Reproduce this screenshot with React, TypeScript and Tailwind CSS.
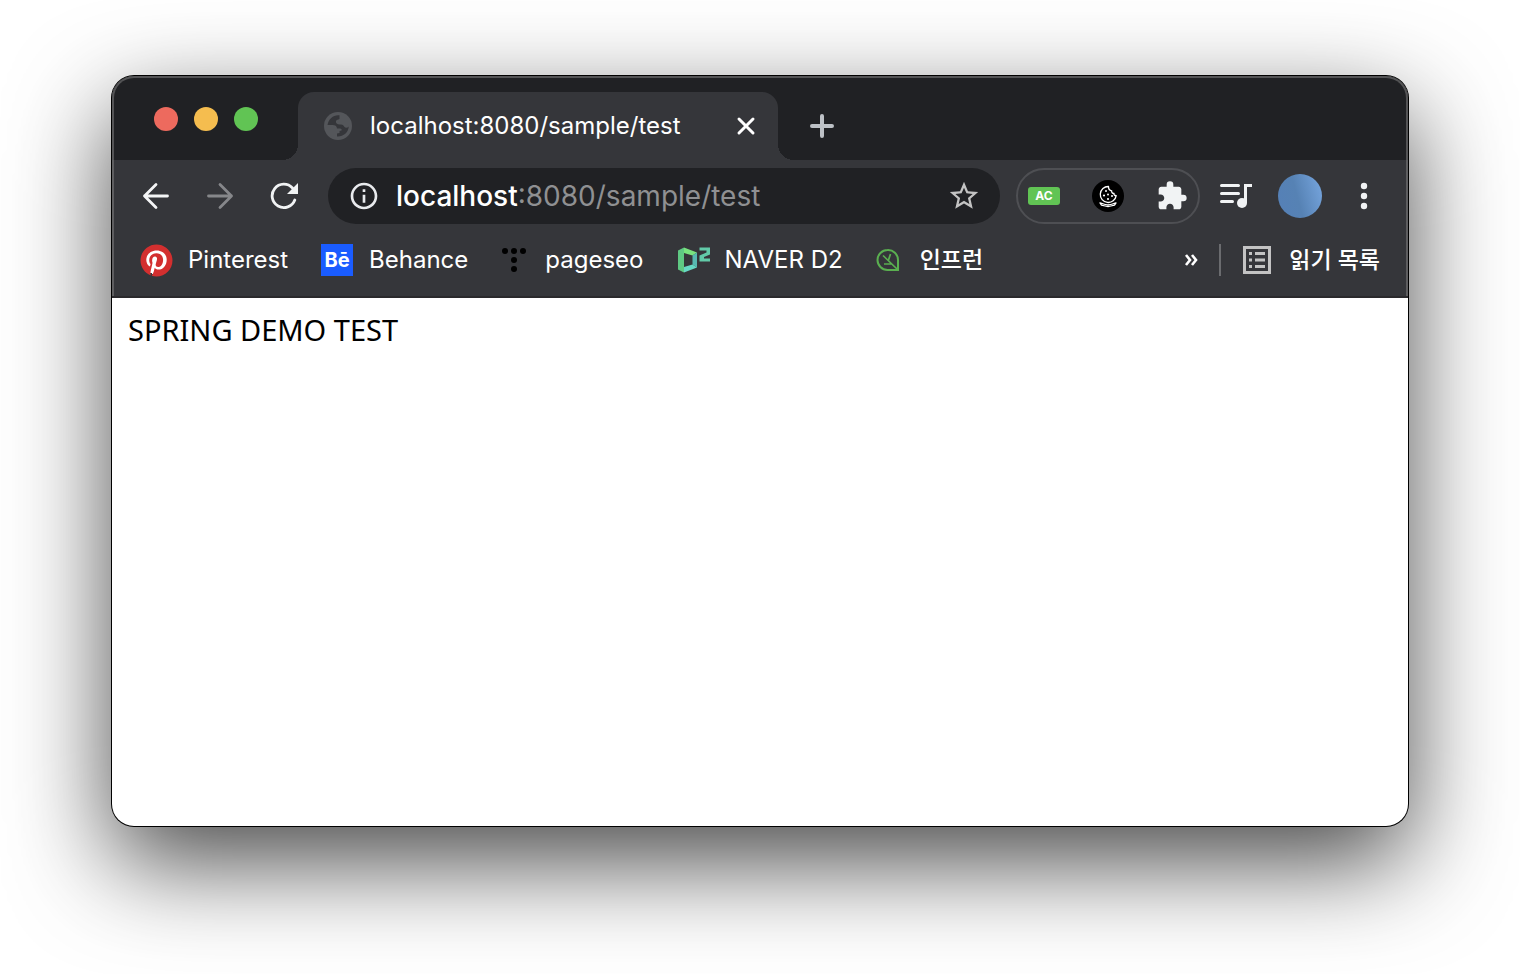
import React from "react";
import { MdExtension, MdStarBorder, MdInfoOutline } from "react-icons/md";
import { FaPinterest } from "react-icons/fa";

const sans = "font-['Inter','Noto_Sans_CJK_KR',sans-serif]";

function Globe() {
  return (
    <svg viewBox="0 0 28 28" className="size-7 shrink-0" aria-hidden="true">
      <circle cx="14" cy="14" r="14" fill="#54565a" />
      <path
        d="M14 3.200C9 3.200 4.500 7 3.500 13H8.500C11 13 13 14 13 16.500H16C17.500 16.500 18 17.500 17.500 18.500L15.500 19V21L13 21.500V24.500C19 25 24.500 20.500 24.700 14.500C23.500 16 21.500 16 20.500 15C19.500 13.500 19 12.500 17 12.500C13.500 13 11.500 11.500 12 9C12.500 7.500 14 8 15.500 7V3.300Z"
        fill="#35363a"
      />
    </svg>
  );
}

function Arrow({ forward = false }: { forward?: boolean }) {
  return (
    <svg
      viewBox="0 0 28 28"
      className={forward ? "size-7 rotate-180" : "size-7"}
      fill="none"
      stroke={forward ? "#86878a" : "#f4f5f6"}
      strokeWidth="2.8"
      strokeLinecap="round"
      strokeLinejoin="round"
      aria-hidden="true"
    >
      <path d="M25.500 14H2.500M14 2.500L2.500 14l11.500 11.500" />
    </svg>
  );
}

function Reload() {
  return (
    <svg viewBox="0 0 28 28" className="size-7" aria-hidden="true">
      <path
        d="M24.800 18A11.700 11.700 0 1 1 22.500 6"
        fill="none"
        stroke="#f1f3f4"
        strokeWidth="2.8"
        strokeLinecap="round"
      />
      <path d="M28 1v11H17Z" fill="#f1f3f4" />
    </svg>
  );
}

function Cookie() {
  return (
    <svg viewBox="0 0 32 32" className="size-8" aria-hidden="true">
      <circle cx="16" cy="16" r="16" fill="#000" />
      <g fill="none" stroke="#fff" strokeWidth="1.300" strokeLinejoin="round" strokeLinecap="round">
        <path d="M16.500 6.500a8 8 0 1 0 7.700 9.200c-1.800 0-2.500-1-2.200-2.400-1.600.2-2.700-1-2.300-2.500-2-.2-3.200-1.800-3.200-4.300Z" />
        <path d="M8 22.800c2 .2 3.500 2 8 2s6-1.800 8-2l-1.500 2.400c-2 0-3.500 1.300-6.500 1.300s-4.500-1.300-6.500-1.300Z" />
      </g>
      <g fill="#fff">
        <circle cx="14" cy="11" r="1" />
        <circle cx="12" cy="15.500" r="1.100" />
        <circle cx="16" cy="14.500" r="1" />
        <circle cx="20" cy="16" r="1" />
        <circle cx="16" cy="19" r="1.100" />
      </g>
    </svg>
  );
}

function Queue() {
  return (
    <svg viewBox="0 0 32 26" className="h-[26px] w-8" aria-hidden="true">
      <path d="M1.500 2.500h17M1.500 10.500h17M1.500 18.500h11" stroke="#f1f3f4" strokeWidth="3" strokeLinecap="round" />
      <path d="M24 20V1h8v3h-5v16Z" fill="#f1f3f4" />
      <circle cx="22" cy="20" r="5" fill="#f1f3f4" />
    </svg>
  );
}

function Dots() {
  const dots = [[4, 4], [13, 4], [22, 4], [13, 13], [13, 22]];
  return (
    <svg viewBox="0 0 26 26" className="size-[26px]" aria-hidden="true">
      {dots.map(([x, y]) => (
        <circle key={`${x}-${y}`} cx={x} cy={y} r="3" fill="#000" />
      ))}
    </svg>
  );
}

function D2() {
  return (
    <svg viewBox="0 0 34 28" className="h-7 w-[34px]" aria-hidden="true">
      <path d="M1 4.500 7 1.500V26.500L1 23.500Z" fill="#5fc983" />
      <path d="M7 1.500 20 6.500 15.500 9.500 7 7Z" fill="#79e27f" />
      <path d="M20 6.500v15l-4.500-3V9.500Z" fill="#57b9b2" />
      <path d="M7 21 15.500 18.500l4.500 3L7 26.500Z" fill="#67d8c5" />
      <path d="M22.500 1.500H33V8.500L27 11v1.500h6v3H22.500V9.500L29.500 6.500V4.500h-7Z" fill="#62caa8" />
    </svg>
  );
}

function Leaf() {
  return (
    <svg viewBox="0 0 24 24" className="size-6" fill="none" stroke="#5aaf50" strokeWidth="2" aria-hidden="true">
      <path d="M11.500 2A10 10 0 0 1 22 12v10H11.500a10 10 0 0 1 0-20Z" />
      <path d="M7 7.500l14 13.500M14.500 6l-2 6M8 16h7.500" strokeWidth="1.700" />
    </svg>
  );
}

function ReadingList() {
  return (
    <svg viewBox="0 0 28 28" className="size-7" fill="#c3c3c3" aria-hidden="true">
      <path d="M0 0h28v28H0ZM3 3v22h22V3Z" fillRule="evenodd" />
      <path d="M6 6h3v3H6ZM12 6h10v3H12ZM6 12.500h3v3H6ZM12 12.500h10v3H12ZM6 19h3v3H6ZM12 19h10v3H12Z" />
    </svg>
  );
}

function Bookmark({ label, gap, children }: { label: string; gap: string; children: React.ReactNode }) {
  return (
    <a href="#" className={`flex items-center whitespace-nowrap ${gap}`}>
      {children}
      <span>{label}</span>
    </a>
  );
}

export default function App() {
  return (
    <div className="flex min-h-screen flex-col bg-white px-28 pt-[76px] pb-[148px]">
      <div
        className={`relative flex flex-1 flex-col overflow-hidden rounded-[22px] bg-white text-2xl text-white shadow-[0_0_0_1px_#000,0_36px_100px_rgba(0,0,0,0.72)] ${sans}`}
      >
        <header className="border-b-2 border-[#2a292c] bg-[#35363a]">
          <div className="flex h-[84px] bg-[#202124] pt-4">
            <div className="flex w-[186px] gap-4 pt-[15px] pl-[42px]">
              <button aria-label="Close window" className="size-6 rounded-full bg-[#ed6a5e]" />
              <button aria-label="Minimize window" className="size-6 rounded-full bg-[#f5bd4f]" />
              <button aria-label="Zoom window" className="size-6 rounded-full bg-[#61c454]" />
            </div>
            <div className="relative flex w-[480px] items-center rounded-t-2xl bg-[#35363a] px-[26px]">
              <span className="absolute bottom-0 -left-4 size-4 bg-[radial-gradient(circle_at_0_0,#202124_16px,#35363a_16px)]" />
              <span className="absolute -right-4 bottom-0 size-4 bg-[radial-gradient(circle_at_100%_0,#202124_16px,#35363a_16px)]" />
              <Globe />
              <span className="ml-[18px] flex-1 whitespace-nowrap">localhost:8080/sample/test</span>
              <button aria-label="Close tab" className="-mr-1">
                <svg viewBox="0 0 20 20" className="size-5" stroke="#fff" strokeWidth="3" strokeLinecap="round">
                  <path d="M3 3l14 14M17 3L3 17" />
                </svg>
              </button>
            </div>
            <button aria-label="New tab" className="ml-8 self-center">
              <svg viewBox="0 0 24 24" className="size-6" stroke="#bdc1c6" strokeWidth="4" strokeLinecap="round">
                <path d="M2 12h20M12 2v20" />
              </svg>
            </button>
          </div>

          <div className="flex h-[72px] items-center pr-[39px] pl-[30px]">
            <nav className="flex items-center gap-9">
              <button aria-label="Back"><Arrow /></button>
              <button aria-label="Forward"><Arrow forward /></button>
              <button aria-label="Reload"><Reload /></button>
            </nav>
            <div className="ml-[30px] flex h-14 flex-1 items-center rounded-full bg-[#202124] pr-[19px] pl-5">
              <MdInfoOutline className="size-8 text-[#e8eaed]" />
              <span className="ml-4 flex-1 pt-0.5 text-[28px] whitespace-nowrap">
                <span className="font-medium">localhost</span>
                <span className="text-[#8f9092]">:8080/sample/test</span>
              </span>
              <button aria-label="Bookmark this page">
                <MdStarBorder className="size-[34px] text-[#c3c3c3]" />
              </button>
            </div>
            <div className="ml-4 flex h-14 w-[184px] items-center justify-between rounded-full border-2 border-[#4e4f53] px-2.5">
              <button className="flex h-[18px] w-8 items-center justify-center rounded-[3px] bg-[#61c454] text-xs font-bold">AC</button>
              <button aria-label="Cookies"><Cookie /></button>
              <button aria-label="Extensions"><MdExtension className="size-8 text-[#f1f3f4]" /></button>
            </div>
            <button aria-label="Media" className="ml-5"><Queue /></button>
            <button
              aria-label="Profile"
              className="ml-[26px] size-11 rounded-full bg-[linear-gradient(75deg,#5580b7_0%,#5682b4_45%,#78a7e0_100%)]"
            />
            <button aria-label="Menu" className="ml-[37px]">
              <svg viewBox="0 0 10 28" className="h-7 w-2.5" fill="#f1f3f4">
                <circle cx="5" cy="4" r="3.200" />
                <circle cx="5" cy="14" r="3.200" />
                <circle cx="5" cy="24" r="3.200" />
              </svg>
            </button>
          </div>

          <div className="flex h-16 items-start justify-between px-7 pt-2">
            <div className="flex h-10 items-center gap-[33px]">
              <Bookmark label="Pinterest" gap="gap-4">
                <span className="flex size-8 items-center justify-center rounded-full bg-[radial-gradient(circle,#fff_14px,transparent_14px)]">
                  <FaPinterest className="size-[33px] shrink-0 text-[#d32f2f]" />
                </span>
              </Bookmark>
              <Bookmark label="Behance" gap="gap-4">
                <span className="flex size-8 items-center justify-center bg-[#1a5cff] text-xl font-bold">Bē</span>
              </Bookmark>
              <Bookmark label="pageseo" gap="gap-[18px]"><Dots /></Bookmark>
              <Bookmark label="NAVER D2" gap="gap-[14px]"><D2 /></Bookmark>
              <a href="#" className="flex items-center gap-5 text-[23px] font-medium whitespace-nowrap">
                <Leaf />
                <span>인프런</span>
              </a>
            </div>
            <div className="flex h-10 items-center">
              <button aria-label="More bookmarks">
                <svg viewBox="0 0 14 14" className="size-3.5" fill="none" stroke="#fff" strokeWidth="2.600">
                  <path d="M2 2l4 5-4 5M8 2l4 5-4 5" />
                </svg>
              </button>
              <span className="ml-[21px] h-8 w-0.5 bg-[#6b6c6f]" />
              <button className="ml-[22px] flex items-center gap-[18px] text-[23px] font-medium whitespace-nowrap">
                <ReadingList />
                <span>읽기 목록</span>
              </button>
            </div>
          </div>
        </header>

        <main className="px-4 pt-3 font-['Noto_Sans',sans-serif] text-[29px] leading-10 text-black">
          SPRING DEMO TEST
        </main>
        <div className="pointer-events-none absolute inset-x-0 top-0 h-[220px] rounded-t-[22px] border-x-2 border-t-2 border-[#8080808c]" />
      </div>
    </div>
  );
}
